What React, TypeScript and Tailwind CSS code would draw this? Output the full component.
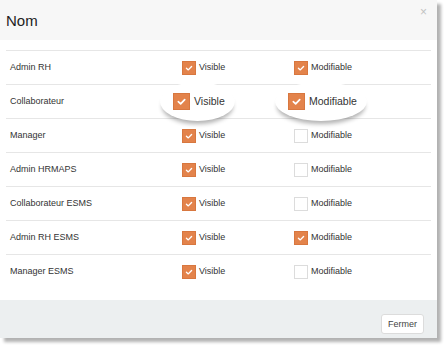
import React from "react";

type Row = { name: string; v: boolean; m: boolean; hl?: boolean };

const rows: Row[] = [
  { name: "Admin RH", v: true, m: true },
  { name: "Collaborateur", v: true, m: true, hl: true },
  { name: "Manager", v: true, m: false },
  { name: "Admin HRMAPS", v: true, m: false },
  { name: "Collaborateur ESMS", v: true, m: false },
  { name: "Admin RH ESMS", v: true, m: true },
  { name: "Manager ESMS", v: true, m: false },
];

function Box({ checked, big }: { checked: boolean; big?: boolean }) {
  const size = big ? "w-[17px] h-[17px]" : "w-[14px] h-[14px]";
  if (!checked) {
    return <span className={`${size} shrink-0 bg-white border border-[#dcdcdc] box-border`} />;
  }
  return (
    <span className={`${size} shrink-0 bg-[#e3834b] border border-[#d8773f] box-border flex items-center justify-center`}>
      <svg viewBox="0 0 14 14" className={big ? "w-[15px] h-[15px]" : "w-[12px] h-[12px]"}>
        <polyline points="4,7.2 6.2,9.2 10,5.2" fill="none" stroke="#fff" strokeWidth="1.6" strokeLinecap="round" strokeLinejoin="round" />
      </svg>
    </span>
  );
}

function Cell({ checked, label, big, shift }: { checked: boolean; label: string; big?: boolean; shift?: string }) {
  return (
    <div className={`relative flex w-fit items-center ${shift ?? ""}`}>
      {big && (
        <div className="absolute left-[-13px] right-[-10px] top-[-11px] bottom-[-11px] rounded-[50%] bg-white shadow-[0_5px_4px_-2px_rgba(0,0,0,0.3)]" />
      )}
      <div className={`relative flex items-center ${big ? "gap-[4px]" : "gap-[3px]"}`}>
        <Box checked={checked} big={big} />
        <span className={`${big ? "text-[10.5px]" : "text-[9px]"} text-[#333] leading-none`}>{label}</span>
      </div>
    </div>
  );
}

export default function App() {
  return (
    <div className="w-[445px] h-[347px] bg-white" style={{ fontFamily: '"Liberation Sans", Arial, sans-serif' }}>
      <div className="w-[437px] h-[338px] bg-white flex flex-col shadow-[4px_4px_3px_rgba(0,0,0,0.3)]">
        <div className="h-[40px] bg-[#f7f7f7] flex items-center justify-between pl-[6px] pr-[10px] relative">
          <span className="text-[15px] text-[#222] leading-none mt-[1px]">Nom</span>
          <span className="absolute right-[10px] top-[6px] text-[12px] text-[#c2c2c2] leading-none">×</span>
        </div>
        <div className="flex-1 pt-[10px] px-[6px]">
          {rows.map((r) => (
            <div key={r.name} className="h-[34px] border-t border-[#e6e6e6] flex items-center">
              <div className="w-[176px] pl-[4px] text-[9px] text-[#333]">{r.name}</div>
              <div className="w-[112px]">
                <Cell checked={r.v} label="Visible" big={r.hl} shift={r.hl ? "-ml-[9px]" : ""} />
              </div>
              <div>
                <Cell checked={r.m} label="Modifiable" big={r.hl} shift={r.hl ? "-ml-[6px]" : ""} />
              </div>
            </div>
          ))}
        </div>
        <div className="h-[38px] bg-[#eceff0] flex justify-end items-start pt-[14px] pr-[13px]">
          <button className="w-[43px] h-[20px] bg-white border border-[#dcdcdc] rounded-[3px] text-[9px] text-[#444] leading-none">
            Fermer
          </button>
        </div>
      </div>
    </div>
  );
}
